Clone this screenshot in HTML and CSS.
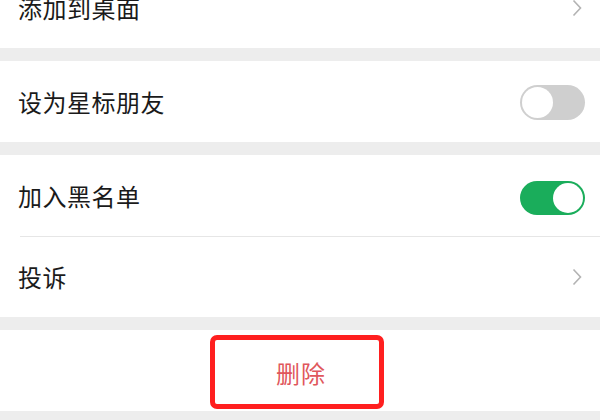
FILE: index.html
```html
<!DOCTYPE html>
<html lang="zh-CN">
<head>
<meta charset="UTF-8">
<title>资料设置</title>
<meta name="viewport" content="width=device-width, initial-scale=1.0">
<link rel="stylesheet" href="styles.css">
</head>
<body>

<div class="page">
    <!-- add to desktop -->
    <section class="group">
        <div class="cell">
            <span class="label">添加到桌面</span>
            <svg class="arrow" viewBox="0 0 10 18"><path d="M1.5 1.5 L8.5 9 L1.5 16.5" /></svg>
        </div>
    </section>

    <!-- star friend -->
    <section class="group">
        <div class="cell">
            <span class="label">设为星标朋友</span>
            <span class="switch"></span>
        </div>
    </section>

    <!-- blacklist + complain -->
    <section class="group">
        <div class="cell">
            <span class="label">加入黑名单</span>
            <span class="switch on"></span>
        </div>
        <div class="cell">
            <span class="label">投诉</span>
            <svg class="arrow" viewBox="0 0 10 18"><path d="M1.5 1.5 L8.5 9 L1.5 16.5" /></svg>
        </div>
    </section>

    <!-- delete -->
    <section class="group">
        <div class="cell center">
            <span class="mark">删除</span>
        </div>
    </section>
</div>

</body>
</html>
```

FILE: styles.css
```css
/* =====  BASE  ===== */
*{box-sizing:border-box;margin:0;padding:0;}
html,body{height:100%;overflow:hidden;}
body{
    background:#ededed;
    font-family:"Noto Sans CJK SC","Noto Sans",sans-serif;
    color:#1a1a1a;
}

/* page starts scrolled: first row is cut at the top */
.page{
    margin-top:-33px;
    display:flex;
    flex-direction:column;
    gap:13px;
}

/* =====  GROUPS / CELLS  ===== */
.group{background:#fff;}
.cell{
    height:81px;
    display:flex;
    align-items:center;
    justify-content:space-between;
    padding:0 15px 0 18px;
    position:relative;
}
.cell + .cell{border-top:1px solid #e6e6e6;margin-left:20px;padding-left:0;}
.cell + .cell .label{margin-left:-2px;}
.label{
    font-size:24px;
    line-height:1;
    letter-spacing:.5px;
}

/* chevron */
.arrow{
    width:10px;
    height:18px;
    margin-right:3px;
    fill:none;
    stroke:#b3b3b3;
    stroke-width:1.6;
}

/* =====  SWITCH  ===== */
.switch{
    width:65px;
    height:35px;
    border-radius:18px;
    background:#cfcfcf;
    position:relative;
    margin-top:2px;
}
.switch::after{
    content:'';
    position:absolute;
    left:2px;
    top:2px;
    width:31px;
    height:31px;
    border-radius:50%;
    background:#fff;
}
.switch.on{background:#1aad5b;height:34px;margin-top:4px;}
.switch.on::after{left:auto;right:2px;width:30px;height:30px;}

/* =====  DELETE  ===== */
.center{justify-content:center;padding:0;}
.mark{
    width:174px;
    height:74px;
    margin:3px 6px 0 0;
    border:5px solid #ff1f1f;
    border-radius:7px;
    display:flex;
    align-items:center;
    justify-content:center;
    padding-left:8px;
    font-size:24px;
    color:#e0575c;
    letter-spacing:1px;
}
```
